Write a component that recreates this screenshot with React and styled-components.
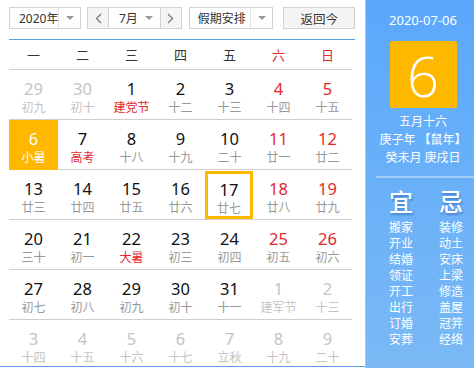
import React from "react";
import styled, { createGlobalStyle } from "styled-components";

const Global = createGlobalStyle`
  html, body { margin: 0; padding: 0; background: #fff; }
  body { font-family: "Noto Sans", "Noto Sans CJK SC", sans-serif; }
`;

const Wrapper = styled.div`
  display: flex;
  width: 474px;
  height: 368px;
  overflow: hidden;
`;

const Main = styled.div`
  width: 365px;
  height: 367px;
  border-bottom: 1px solid #5c9fe6;
  padding: 7px 0 0 9px;
  box-sizing: border-box;
`;

const Toolbar = styled.div`
  display: flex;
  align-items: center;
  height: 22px;
  width: 346px;
  padding-bottom: 10px;
  border-bottom: 1px solid #5b9fe3;
  font-size: 12px;
  color: #333;
`;

const Select = styled.div`
  display: flex;
  height: 22px;
  width: ${(p) => p.w}px;
  margin-right: ${(p) => p.mr || 0}px;
  border: 1px solid #d2d2d2;
  box-sizing: border-box;
  background: #fff;
`;

const SelectText = styled.div`
  flex: 1;
  min-width: 0;
  display: flex;
  align-items: center;
  padding-left: ${(p) => p.pl || 9}px;
  border-right: ${(p) => (p.plain ? "none" : "1px solid #e2e2e2")};
  white-space: nowrap;
`;

const Caret = styled.div`
  width: ${(p) => p.w || 21}px;
  display: flex;
  align-items: center;
  justify-content: center;
  &::after {
    content: "";
    border-left: 4px solid transparent;
    border-right: 4px solid transparent;
    border-top: 4px solid #999;
  }
`;

const ArrowBtn = styled.div`
  width: 20px;
  display: flex;
  align-items: center;
  justify-content: center;
  background: #f5f5f5;
  border-left: ${(p) => (p.right ? "1px solid #d2d2d2" : "none")};
  border-right: ${(p) => (p.right ? "none" : "1px solid #d2d2d2")};
`;

const Button = styled.div`
  width: 72px;
  height: 22px;
  margin-left: 10px;
  border: 1px solid #d2d2d2;
  box-sizing: border-box;
  background: #f5f5f5;
  display: flex;
  align-items: center;
  justify-content: center;
  font-size: 12.5px;
`;

const Grid = styled.div`
  width: 346px;
  display: grid;
  grid-template-columns: repeat(7, 49px);
`;

const Week = styled.div`
  height: 29px;
  display: flex;
  align-items: center;
  justify-content: center;
  font-size: 13px;
  color: ${(p) => (p.red ? "#e5272d" : "#333")};
  border-bottom: 1px solid #cfcfcf;
`;

const Row = styled.div`
  grid-column: 1 / -1;
  display: grid;
  grid-template-columns: repeat(7, 49px);
  height: ${(p) => (p.last ? 48 : 49)}px;
  border-bottom: ${(p) => (p.last ? "none" : "1px solid #cfcfcf")};
`;

const Cell = styled.div`
  display: flex;
  flex-direction: column;
  align-items: center;
  padding-top: 8px;
  box-sizing: border-box;
  height: 50px;
  background: ${(p) => (p.sel ? "#ffb800" : "transparent")};
  ${(p) =>
    p.today
      ? "border: 3px solid #ffb800; height: 48px; width: 48px; margin-top: 1px; padding-top: 5px;"
      : ""}
`;

const Num = styled.div`
  font-size: 16.5px;
  line-height: 22px;
  color: ${(p) => p.c};
`;

const Lunar = styled.div`
  font-size: 12px;
  line-height: 16px;
  color: ${(p) => p.c};
`;

const Side = styled.div`
  width: 109px;
  height: 368px;
  background: linear-gradient(#5aa8fc, #7ab9f5);
  border-left: 1px solid #9ccaf8;
  box-sizing: border-box;
  padding-left: 6px;
  color: #fff;
  display: flex;
  flex-direction: column;
  align-items: center;
`;

const DateText = styled.div`
  margin-top: 11px;
  font-size: 13px;
  line-height: 18px;
`;

const BigDay = styled.div`
  margin-top: 12px;
  width: 67px;
  height: 67px;
  border-radius: 2px;
  background: #ffb800;
  display: flex;
  align-items: center;
  justify-content: center;
  font-size: 56px;
  font-weight: 300;
  font-family: "Open Sans", "Noto Sans", sans-serif;
`;

const Info = styled.div`
  margin-top: 5px;
  font-size: 12px;
  line-height: 18px;
  text-align: center;
  white-space: nowrap;
`;

const Divider = styled.div`
  margin-top: 9px;
  width: 100px;
  margin-left: 6px;
  height: 2px;
  background: #a3cdf7;
`;

const YiJi = styled.div`
  display: grid;
  grid-template-columns: 50px 50px;
  margin-top: 8px;
  margin-left: 6px;
  text-align: center;
`;

const Big = styled.div`
  font-size: 24px;
  line-height: 32px;
  font-weight: 500;
  text-shadow: 1px 2px 2px rgba(0, 40, 120, 0.35);
  margin-bottom: 2px;
`;

const Item = styled.div`
  font-size: 12px;
  line-height: 16px;
`;

const BLACK = "#111";
const GREY = "#999";
const LIGHT = "#c4c4c4";
const RED = "#e5272d";

const rows = [
  [["29", "初九", "o"], ["30", "初十", "o"], ["1", "建党节", "f"], ["2", "十二"], ["3", "十三"], ["4", "十四", "w"], ["5", "十五", "w"]],
  [["6", "小暑", "s"], ["7", "高考", "f"], ["8", "十八"], ["9", "十九"], ["10", "二十"], ["11", "廿一", "w"], ["12", "廿二", "w"]],
  [["13", "廿三"], ["14", "廿四"], ["15", "廿五"], ["16", "廿六"], ["17", "廿七", "t"], ["18", "廿八", "w"], ["19", "廿九", "w"]],
  [["20", "三十"], ["21", "初一"], ["22", "大暑", "f"], ["23", "初三"], ["24", "初四"], ["25", "初五", "w"], ["26", "初六", "w"]],
  [["27", "初七"], ["28", "初八"], ["29", "初九"], ["30", "初十"], ["31", "十一"], ["1", "建军节", "o"], ["2", "十三", "o"]],
  [["3", "十四", "o"], ["4", "十五", "o"], ["5", "十六", "o"], ["6", "十七", "o"], ["7", "立秋", "o"], ["8", "十九", "o"], ["9", "二十", "o"]],
];

const colors = (kind) => {
  if (kind === "o") return [LIGHT, LIGHT];
  if (kind === "s") return ["#fff", "#fff"];
  if (kind === "f") return [BLACK, RED];
  if (kind === "w") return [RED, GREY];
  return [BLACK, GREY];
};

const yi = ["搬家", "开业", "结婚", "领证", "开工", "出行", "订婚", "安葬"];
const ji = ["装修", "动土", "安床", "上梁", "修造", "盖屋", "冠笄", "经络"];

export default function App() {
  return (
    <Wrapper>
      <Global />
      <Main>
        <Toolbar>
          <Select w={72} mr={6}>
            <SelectText>2020年</SelectText>
            <Caret />
          </Select>
          <Select w={95} mr={7}>
            <ArrowBtn>
              <svg width="7" height="11" viewBox="0 0 7 11">
                <path d="M6 1 L1.5 5.5 L6 10" fill="none" stroke="#777" strokeWidth="1.2" />
              </svg>
            </ArrowBtn>
            <SelectText plain pl={10}>7月</SelectText>
            <Caret />
            <ArrowBtn right>
              <svg width="7" height="11" viewBox="0 0 7 11">
                <path d="M1 1 L5.5 5.5 L1 10" fill="none" stroke="#777" strokeWidth="1.2" />
              </svg>
            </ArrowBtn>
          </Select>
          <Select w={85}>
            <SelectText pl={8}>假期安排</SelectText>
            <Caret />
          </Select>
          <Button>返回今</Button>
        </Toolbar>
        <Grid>
          {["一", "二", "三", "四", "五", "六", "日"].map((w, i) => (
            <Week key={w} red={i > 4}>
              {w}
            </Week>
          ))}
          {rows.map((r, ri) => (
            <Row key={ri} last={ri === rows.length - 1}>
              {r.map(([n, l, k], ci) => {
                const [nc, lc] = colors(k);
                return (
                  <Cell key={ci} sel={k === "s"} today={k === "t"}>
                    <Num c={nc}>{n}</Num>
                    <Lunar c={lc}>{l}</Lunar>
                  </Cell>
                );
              })}
            </Row>
          ))}
        </Grid>
      </Main>
      <Side>
        <DateText>2020-07-06</DateText>
        <BigDay>6</BigDay>
        <Info>
          五月十六
          <br />
          庚子年 【鼠年】
          <br />
          癸未月 庚戌日
        </Info>
        <Divider />
        <YiJi>
          <div>
            <Big>宜</Big>
            {yi.map((t) => (
              <Item key={t}>{t}</Item>
            ))}
          </div>
          <div>
            <Big>忌</Big>
            {ji.map((t) => (
              <Item key={t}>{t}</Item>
            ))}
          </div>
        </YiJi>
      </Side>
    </Wrapper>
  );
}
